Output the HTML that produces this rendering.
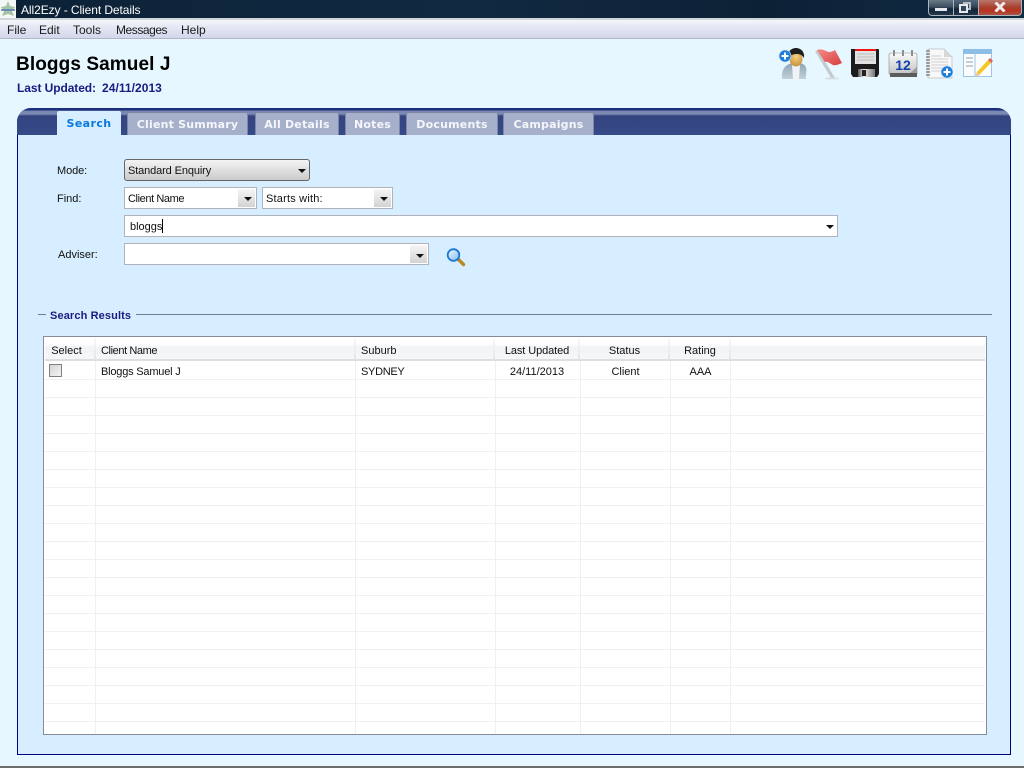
<!DOCTYPE html>
<html>
<head>
<meta charset="utf-8">
<title>All2Ezy - Client Details</title>
<style>
html,body{margin:0;padding:0;width:1024px;height:768px;overflow:hidden;background:#e6f7ff;font-family:"Liberation Sans",sans-serif;font-size:11px;color:#111}
div,span{position:absolute;white-space:nowrap;box-sizing:border-box}
.t{line-height:14px}
.tab{top:112px;height:23px;background:#a7b0cb;border:1px solid #7d88a8;border-bottom:none;border-radius:2px 2px 0 0;color:#f4f6fb;font:bold 11px/23px "DejaVu Sans",sans-serif;text-align:center;letter-spacing:.2px}
.sel{background:#fff;border:1px solid #b0b4ba}
.btn{top:1px;bottom:1px;right:1px;width:17px;background:linear-gradient(#f6f6f6,#d2d2d2)}
.arr{width:0;height:0;border-left:4px solid transparent;border-right:4px solid transparent;border-top:4px solid #111}
.hl{height:1px;background:#f0f0f0}
.vl{width:1px;background:#f0f0f0}
.h{top:344px;text-align:center;line-height:14px}
.hs{width:2px;top:338px;height:22px;background:linear-gradient(#f8f8f8,#e4e5e7)}
.m{top:23px;font-size:12px;line-height:14px;color:#1a1a1a}
</style>
</head>
<body>
<!-- title bar -->
<div style="left:0;top:0;width:1024px;height:18px;background:linear-gradient(90deg,#0b2136,#112a42 45%,#0d2136 75%,#0f2b44)"></div>
<div style="left:0;top:18px;width:1024px;height:2px;background:#cfd6da"></div>
<div style="left:0;top:0;width:16px;height:18px;background:#f4f8f4"></div>
<svg style="position:absolute;left:0;top:1px" width="16" height="16"><path d="M8 0l2 5 5 1-3 4 2 5-6-2-6 2 2-5-3-4 5-1z" fill="#a4c4a8"/><rect x="1" y="8" width="14" height="2" fill="#5f80b4" opacity=".85"/></svg>
<div class="t" style="left:21px;top:3px;color:#fff;font-size:12px;letter-spacing:-.08px">All2Ezy - Client Details</div>
<!-- window buttons -->
<div style="left:928px;top:0;width:26px;height:16px;border:1px solid #aab4bc;border-top:none;border-radius:0 0 0 4px;background:linear-gradient(#6a7a87,#3d4f60 45%,#14263a 60%,#24384c)"></div>
<div style="left:953px;top:0;width:26px;height:16px;border:1px solid #aab4bc;border-top:none;background:linear-gradient(#55677a,#33465a 45%,#14263a 60%,#20344a)"></div>
<div style="left:978px;top:0;width:44px;height:16px;border:1px solid #aab4bc;border-top:none;border-radius:0 0 4px 0;background:linear-gradient(#b9766c,#a8402e 50%,#b8331d 70%,#a85446)"></div>
<div style="left:935px;top:8px;width:12px;height:3px;background:#e6eaee"></div>
<div style="left:963px;top:2px;width:8px;height:8px;border:2px solid #b4bdc5"></div>
<div style="left:959px;top:4px;width:9px;height:9px;border:2px solid #e6eaee;background:#33485a"></div>
<svg style="position:absolute;left:994px;top:2px" width="12" height="10"><path d="M1.5 0.5L10.5 9.5M10.5 0.5L1.5 9.5" stroke="#f0ecec" stroke-width="3"/></svg>
<!-- menu -->
<div style="left:0;top:20px;width:1024px;height:19px;background:linear-gradient(#f4f6fa,#e4e7f4 40%,#d3d7ea);border-bottom:1px solid #b4b4c8"></div>
<div class="m" style="left:7px">File</div>
<div class="m" style="left:39px">Edit</div>
<div class="m" style="left:73px">Tools</div>
<div class="m" style="left:116px;letter-spacing:-.45px">Messages</div>
<div class="m" style="left:181px">Help</div>
<!-- heading -->
<div style="left:16px;top:54px;font:bold 19px/22px 'Liberation Sans',sans-serif;color:#000;letter-spacing:.1px">Bloggs Samuel J</div>
<div class="t" style="left:17px;top:81px;font-weight:bold;font-size:12px;color:#1c1a80;letter-spacing:-.08px">Last Updated:</div>
<div class="t" style="left:102px;top:81px;font-weight:bold;font-size:12px;color:#1c1a80;letter-spacing:.05px">24/11/2013</div>
<!-- toolbar icons -->
<svg style="position:absolute;left:778px;top:46px" width="218" height="34" viewBox="0 0 218 34">
 <defs>
  <linearGradient id="sh" x1="0" y1="0" x2="0" y2="1"><stop offset="0" stop-color="#8ea6b6"/><stop offset="1" stop-color="#c3d0d8"/></linearGradient>
  <radialGradient id="fa" cx=".5" cy=".35" r=".7"><stop offset="0" stop-color="#f7d084"/><stop offset="1" stop-color="#c58d35"/></radialGradient>
  <linearGradient id="gr" x1="0" y1="0" x2="0" y2="1"><stop offset="0" stop-color="#fafafa"/><stop offset="1" stop-color="#c4c4c4"/></linearGradient>
  <linearGradient id="me" x1="0" y1="0" x2="1" y2="0"><stop offset="0" stop-color="#555"/><stop offset=".35" stop-color="#eee"/><stop offset="1" stop-color="#777"/></linearGradient>
  <linearGradient id="fl" x1="0" y1="0" x2="1" y2="1"><stop offset="0" stop-color="#f48a8a"/><stop offset="1" stop-color="#d8403f"/></linearGradient>
  <linearGradient id="lens" x1="0" y1="0" x2="1" y2="1"><stop offset="0" stop-color="#f2fbff"/><stop offset="1" stop-color="#7ebcf0"/></linearGradient>
 </defs>
 <!-- person -->
 <path d="M4 33c0-8 1-12 7-15 3-1 11-1 14 0 5 3 3 7 3 15z" fill="url(#sh)"/>
 <path d="M14 19l1 14h6l1-14z" fill="#f0f3f5"/>
 <ellipse cx="18" cy="13" rx="6.5" ry="7.5" fill="url(#fa)"/>
 <path d="M10 12c-1-7 4-10 8-10s9 3 8 10c-2-3-4-4-7-4-4 0-6 1-9 4z" fill="#1e1e1e"/>
 <circle cx="7" cy="10" r="6" fill="#1d7fd8" stroke="#cfe6fa" stroke-width=".6"/><path d="M3.5 10h7M7 6.5v7" stroke="#fff" stroke-width="2"/>
 <!-- flag -->
 <path d="M37 5l16 27h4L40 4z" fill="#c4cbce"/>
 <path d="M39 4c5-2 8 1 12 2 3 0 6-2 6-2l7 13c-3 1-6 3-9 2-4-2-5-4-8-3z" fill="url(#fl)"/>
 <ellipse cx="54" cy="32.5" rx="7" ry="1" fill="#d6dcdf"/>
 <!-- floppy -->
 <path d="M73 3h27q1 0 1 1v24l-2 3H75l-2-3z" fill="#1c1c1c"/>
 <rect x="77" y="3" width="21" height="2" fill="#f01616"/>
 <rect x="77" y="5" width="21" height="13" fill="#e2e2e2"/>
 <path d="M79 8h17M79 11h17M79 14h17" stroke="#bdbdbd"/>
 <rect x="80" y="23" width="17" height="8" fill="url(#me)"/><rect x="84" y="24" width="4" height="6" fill="#222"/>
 <!-- calendar -->
 <path d="M113 7h24q2 0 2 2v19h-28V9q0-2 2-2z" fill="url(#gr)" stroke="#8a8a8a" stroke-width=".6"/>
 <path d="M116 4v6M125 4v6M134 4v6" stroke="#8e8e8e" stroke-width="2"/>
 <rect x="112" y="27" width="27" height="4" fill="#5c5c5c"/>
 <path d="M132 27l7-6v6z" fill="#9b9b9b"/>
 <text x="125" y="24" text-anchor="middle" font-family="Liberation Sans" font-weight="bold" font-size="14" fill="#123fa8">12</text>
 <!-- notebook -->
 <path d="M150 3h16l8 8v21h-24z" fill="#f8f8f8" stroke="#bcbcbc" stroke-width=".7"/>
 <path d="M166 3v8h8z" fill="#d8d8d8"/>
 <path d="M153 10h10M153 13h17M153 16h17M153 19h17M153 22h12M153 25h10" stroke="#cfcfcf"/>
 <path d="M148 5h4M148 8h4M148 11h4M148 14h4M148 17h4M148 20h4M148 23h4M148 26h4M148 29h4" stroke="#555" stroke-width="1"/>
 <circle cx="169" cy="26" r="6" fill="#1d7fd8" stroke="#d6eafb" stroke-width=".6"/><path d="M165.5 26h7M169 22.5v7" stroke="#fff" stroke-width="2"/>
 <!-- form pencil -->
 <rect x="185.5" y="3.5" width="28" height="27" fill="#fafcfe" stroke="#9cc4e6"/>
 <rect x="185" y="3" width="29" height="5" fill="#8dbfe6"/>
 <path d="M197 8v23" stroke="#9cc4e6"/>
 <path d="M188 12h7M188 16h7M188 20h7" stroke="#a7b2bc" stroke-width="1.3"/>
 <path d="M197 31l2-5 11-12 3 3-11 11z" fill="#f3c824"/>
 <path d="M210 14l2-2 3 3-2 2z" fill="#e0625a"/>
 <path d="M197 31l2-5 3 3z" fill="#eac9a0"/>
</svg>
<!-- panel -->
<div style="left:17px;top:108px;width:994px;height:647px;background:#d6eeff;border:1px solid #00008b;border-top:none;border-radius:14px 14px 0 0"></div>
<div style="left:17px;top:108px;width:994px;height:27px;border-radius:14px 14px 0 0;background:linear-gradient(#1c2f7c 0,#1c2f7c 2px,#7786b0 3px,#7d8bb4 6px,#33437f 8px,#354a88 100%)"></div>
<div class="tab" style="left:57px;top:111px;width:64px;height:25px;background:#d6eeff;border:none;color:#0a78dc;line-height:25px;letter-spacing:.4px">Search</div>
<div class="tab" style="left:127px;width:121px">Client Summary</div>
<div class="tab" style="left:255px;width:84px">All Details</div>
<div class="tab" style="left:345px;width:55px">Notes</div>
<div class="tab" style="left:406px;width:92px">Documents</div>
<div class="tab" style="left:503px;width:91px">Campaigns</div>
<!-- form -->
<div class="t" style="left:57px;top:164px;letter-spacing:-.1px">Mode:</div>
<div style="left:124px;top:159px;width:186px;height:22px;border:1px solid #666;border-radius:3px;background:linear-gradient(#f4f4f4,#cbcbcb)"></div>
<div class="t" style="left:128px;top:164px;letter-spacing:-.12px">Standard Enquiry</div>
<div class="arr" style="left:298px;top:169px"></div>
<div class="t" style="left:57px;top:192px">Find:</div>
<div class="sel" style="left:124px;top:187px;width:133px;height:22px"><div class="btn"></div></div>
<div class="t" style="left:128px;top:192px;letter-spacing:-.4px">Client Name</div>
<div class="arr" style="left:244px;top:197px"></div>
<div class="sel" style="left:262px;top:187px;width:131px;height:22px"><div class="btn"></div></div>
<div class="t" style="left:266px;top:192px;letter-spacing:.2px">Starts with:</div>
<div class="arr" style="left:380px;top:197px"></div>
<div class="sel" style="left:124px;top:215px;width:714px;height:22px"></div>
<div class="t" style="left:130px;top:220px">bloggs</div>
<div style="left:162px;top:219px;width:1px;height:14px;background:#000"></div>
<div class="arr" style="left:826px;top:225px"></div>
<div class="t" style="left:58px;top:248px">Adviser:</div>
<div class="sel" style="left:124px;top:243px;width:305px;height:22px"><div class="btn"></div></div>
<div class="arr" style="left:416px;top:254px"></div>
<svg style="position:absolute;left:446px;top:247px" width="20" height="20" viewBox="0 0 20 20">
 <path d="M12.5 12.5l5 5" stroke="#b98a1e" stroke-width="3.4" stroke-linecap="round"/>
 <circle cx="7.5" cy="8" r="5.8" fill="url(#lens)" stroke="#1a78d2" stroke-width="1.8"/>
</svg>
<!-- search results -->
<div style="left:38px;top:314px;width:8px;height:1px;background:#6e7d8c"></div>
<div class="t" style="left:50px;top:309px;font-weight:bold;color:#1c1a80;letter-spacing:.12px">Search Results</div>
<div style="left:136px;top:314px;width:856px;height:1px;background:#6e7d8c"></div>
<!-- grid -->
<div style="left:43px;top:336px;width:944px;height:399px;background:#fff;border:1px solid #878d98"></div>
<div style="left:45px;top:338px;width:940px;height:23px;background:linear-gradient(#fff,#fff 25%,#f2f3f5 45%,#f6f7f8);border-bottom:2px solid #dedede"></div>
<div class="hs" style="left:94px"></div><div class="hs" style="left:354px"></div><div class="hs" style="left:493px"></div><div class="hs" style="left:578px"></div><div class="hs" style="left:668px"></div><div class="hs" style="left:729px"></div>
<div class="h" style="left:45px;width:43px">Select</div>
<div class="h" style="left:101px;letter-spacing:-.4px">Client Name</div>
<div class="h" style="left:361px">Suburb</div>
<div class="h" style="left:495px;width:84px;letter-spacing:-.1px">Last Updated</div>
<div class="h" style="left:580px;width:89px">Status</div>
<div class="h" style="left:670px;width:60px">Rating</div>
<!-- vertical column lines -->
<div class="vl" style="left:95px;top:361px;height:373px"></div>
<div class="vl" style="left:355px;top:361px;height:373px"></div>
<div class="vl" style="left:495px;top:361px;height:373px"></div>
<div class="vl" style="left:580px;top:361px;height:373px"></div>
<div class="vl" style="left:670px;top:361px;height:373px"></div>
<div class="vl" style="left:730px;top:361px;height:373px"></div>
<!-- horizontal row lines -->
<div class="hl" style="left:45px;width:940px;top:379px"></div>
<div class="hl" style="left:45px;width:940px;top:397px"></div>
<div class="hl" style="left:45px;width:940px;top:415px"></div>
<div class="hl" style="left:45px;width:940px;top:433px"></div>
<div class="hl" style="left:45px;width:940px;top:451px"></div>
<div class="hl" style="left:45px;width:940px;top:469px"></div>
<div class="hl" style="left:45px;width:940px;top:487px"></div>
<div class="hl" style="left:45px;width:940px;top:505px"></div>
<div class="hl" style="left:45px;width:940px;top:523px"></div>
<div class="hl" style="left:45px;width:940px;top:541px"></div>
<div class="hl" style="left:45px;width:940px;top:559px"></div>
<div class="hl" style="left:45px;width:940px;top:577px"></div>
<div class="hl" style="left:45px;width:940px;top:595px"></div>
<div class="hl" style="left:45px;width:940px;top:613px"></div>
<div class="hl" style="left:45px;width:940px;top:631px"></div>
<div class="hl" style="left:45px;width:940px;top:649px"></div>
<div class="hl" style="left:45px;width:940px;top:667px"></div>
<div class="hl" style="left:45px;width:940px;top:685px"></div>
<div class="hl" style="left:45px;width:940px;top:703px"></div>
<div class="hl" style="left:45px;width:940px;top:721px"></div>
<!-- row 1 -->
<div style="left:49px;top:364px;width:13px;height:13px;border:1px solid #808080;background:linear-gradient(135deg,#d4d4d4,#f4f4f4)"></div>
<div class="t" style="left:101px;top:365px;letter-spacing:-.2px">Bloggs Samuel J</div>
<div class="t" style="left:361px;top:365px;letter-spacing:-.3px">SYDNEY</div>
<div class="t" style="left:496px;top:365px;width:82px;text-align:center">24/11/2013</div>
<div class="t" style="left:581px;top:365px;width:89px;text-align:center">Client</div>
<div class="t" style="left:671px;top:365px;width:59px;text-align:center">AAA</div>
<!-- bottom edge -->
<div style="left:0;top:766px;width:1024px;height:2px;background:#6d6d6d"></div>
</body>
</html>
